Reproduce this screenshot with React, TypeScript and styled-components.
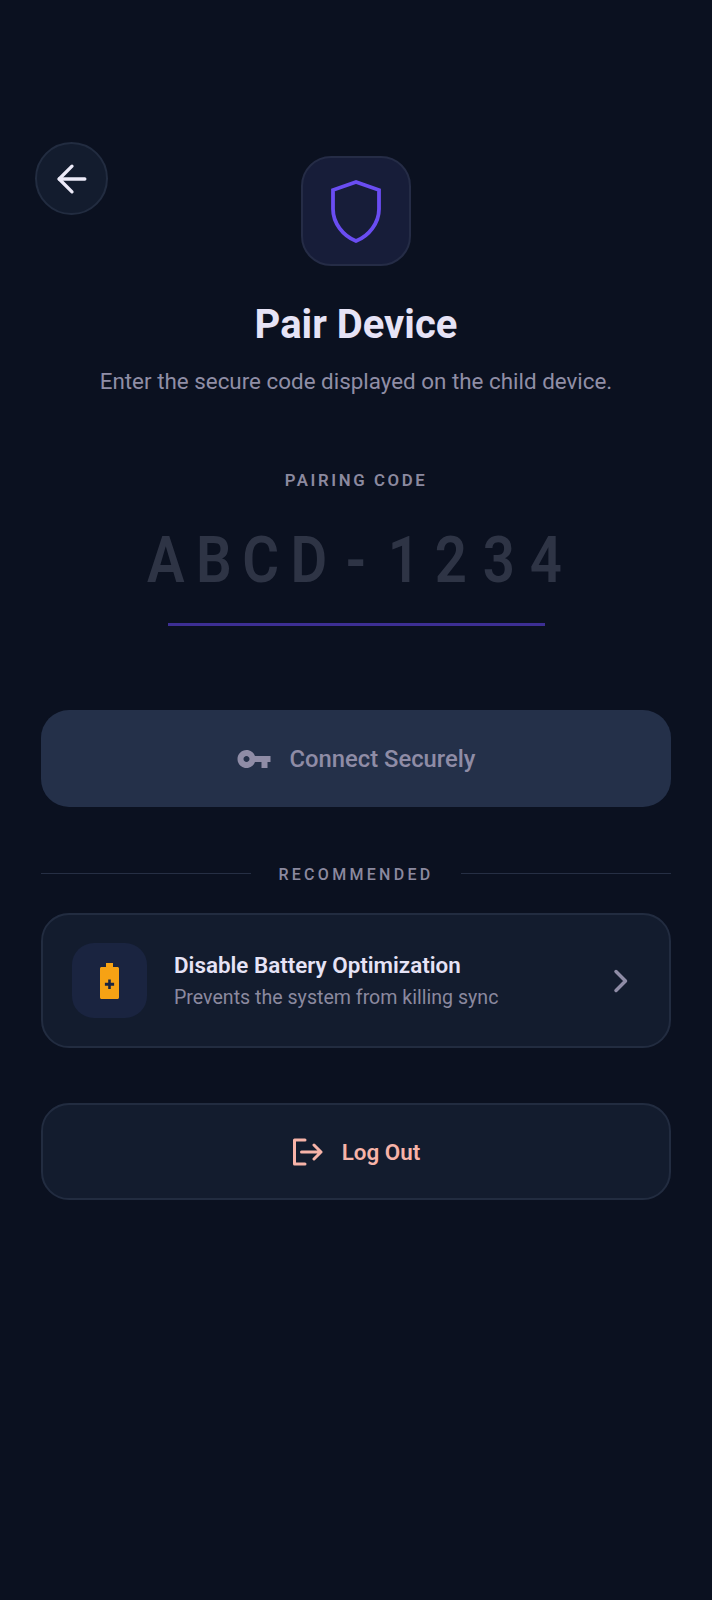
import { ArrowLeft } from "lucide-react";
import styled, { createGlobalStyle } from "styled-components";

const CODE_HINT = "ABCD-1234".split("");

export default function App() {
  return (
    <>
      <GlobalStyle />
      <Screen>
        <BackButton aria-label="Back">
          <ArrowLeft size={44} strokeWidth={1.8} />
        </BackButton>

        <Header>
          <ShieldTile>
            <svg width="52" height="66" viewBox="0 0 52 66" fill="none">
              <path
                d="M26 4 L3 12 V31 C3 45 13 58 26 63 C39 58 49 45 49 31 V12 Z"
                stroke="#6a4df2"
                strokeWidth="3.800"
                strokeLinejoin="miter"
              />
            </svg>
          </ShieldTile>
          <Title>Pair Device</Title>
          <Subtitle>Enter the secure code displayed on the child device.</Subtitle>
        </Header>

        <CodeSection>
          <CodeLabel>PAIRING CODE</CodeLabel>
          <CodeHint>
            {CODE_HINT.map((char, i) => (
              <CodeChar key={i}>{char}</CodeChar>
            ))}
          </CodeHint>
          <CodeUnderline />
        </CodeSection>

        <ConnectButton>
          <svg width="36" height="36" viewBox="0 0 24 24" fill="#8f8ca6">
            <path d="M12.65 10C11.83 7.67 9.61 6 7 6c-3.31 0-6 2.69-6 6s2.69 6 6 6c2.61 0 4.83-1.67 5.65-4H17v4h4v-4h2v-4H12.65zM7 14c-1.100 0-2-.9-2-2s.9-2 2-2 2 .9 2 2-.9 2-2 2z" />
          </svg>
          Connect Securely
        </ConnectButton>

        <Divider>
          <DividerLine />
          <DividerText>RECOMMENDED</DividerText>
          <DividerLine />
        </Divider>

        <BatteryCard>
          <BatteryTile>
            <svg width="19" height="36" viewBox="0 0 19 36">
              <path
                fill="#f6a214"
                fillRule="evenodd"
                d="M6 0h7v4h4.500c.8 0 1.500.7 1.500 1.500V34.500c0 .8-.7 1.500-1.500 1.500H1.500C.7 36 0 35.300 0 34.500V5.500C0 4.700.7 4 1.500 4H6zM8.200 16.500v3.300H4.900v3h3.300v3.300h2.600v-3.300h3.300v-3h-3.300v-3.300z"
              />
            </svg>
          </BatteryTile>
          <CardText>
            <CardTitle>Disable Battery Optimization</CardTitle>
            <CardSubtitle>Prevents the system from killing sync</CardSubtitle>
          </CardText>
          <svg width="16" height="24" viewBox="0 0 16 24" fill="none">
            <path
              d="M3 2.500 L12.500 12 L3 21.500"
              stroke="#8f8ca6"
              strokeWidth="3.500"
              strokeLinecap="round"
              strokeLinejoin="round"
            />
          </svg>
        </BatteryCard>

        <LogoutButton>
          <svg width="31" height="28" viewBox="0 0 31 28" fill="none">
            <path
              d="M13 2H2.500V26H13M9.500 14H29M22 7 L29 14 L22 21"
              stroke="#f7b3a8"
              strokeWidth="3"
              strokeLinecap="round"
              strokeLinejoin="round"
            />
          </svg>
          Log Out
        </LogoutButton>
      </Screen>
    </>
  );
}

// ------------------ STYLES ------------------
const GlobalStyle = createGlobalStyle`
  html, body {
    margin: 0;
    padding: 0;
    background: #0b1120;
  }

  * {
    box-sizing: border-box;
  }
`;

const Screen = styled.div`
  position: relative;
  width: 712px;
  min-height: 1600px;
  padding: 156px 41px 0;
  display: flex;
  flex-direction: column;
  background: #0b1120;
  font-family: Roboto, "Liberation Sans", sans-serif;
`;

const BackButton = styled.button`
  position: absolute;
  left: 35px;
  top: 142px;
  width: 73px;
  height: 73px;
  padding: 0;
  display: flex;
  align-items: center;
  justify-content: center;
  border-radius: 50%;
  border: 2px solid #222c40;
  background: #131c2e;
  color: #eceaf8;
`;

const Header = styled.div`
  display: flex;
  flex-direction: column;
  align-items: center;
`;

const ShieldTile = styled.div`
  width: 110px;
  height: 110px;
  display: flex;
  align-items: center;
  justify-content: center;
  border-radius: 30px;
  border: 2px solid #252c46;
  background: #171d39;
`;

const Title = styled.h1`
  margin: 35px 0 0;
  font-size: 40px;
  line-height: 48px;
  font-weight: 700;
  color: #e6e3f6;
`;

const Subtitle = styled.p`
  margin: 17px 0 0;
  font-size: 22.400px;
  line-height: 30px;
  font-weight: 400;
  color: #908ea6;
`;

const CodeSection = styled.div`
  margin-top: 73px;
  display: flex;
  flex-direction: column;
  align-items: center;
`;

const CodeLabel = styled.div`
  font-size: 16.800px;
  line-height: 22px;
  font-weight: 600;
  letter-spacing: 2.600px;
  color: #8b899f;
`;

const CodeHint = styled.div`
  margin-top: 32px;
  display: flex;
  justify-content: center;
  font-size: 64px;
  line-height: 76px;
  font-weight: 600;
  color: #2e3445;
`;

const CodeChar = styled.span`
  display: inline-block;
  width: 47.500px;
  text-align: center;
  transform: scaleX(0.88);
`;

const CodeUnderline = styled.div`
  margin-top: 24px;
  width: 377px;
  height: 3px;
  background: #3d2f94;
`;

const ConnectButton = styled.button`
  margin-top: 84px;
  height: 97px;
  display: flex;
  align-items: center;
  justify-content: center;
  gap: 17px;
  border: none;
  border-radius: 28px;
  background: #243049;
  color: #8f8ca6;
  font-family: inherit;
  font-size: 23.800px;
  font-weight: 500;
`;

const Divider = styled.div`
  margin-top: 53px;
  display: flex;
  align-items: center;
  gap: 27px;
`;

const DividerLine = styled.div`
  flex: 1;
  height: 1px;
  background: #262f44;
`;

const DividerText = styled.div`
  padding-top: 4px;
  font-size: 16px;
  line-height: 22px;
  font-weight: 500;
  letter-spacing: 3.300px;
  color: #8b899f;
`;

const BatteryCard = styled.div`
  margin-top: 27px;
  height: 135px;
  padding: 0 40px 0 29px;
  display: flex;
  align-items: center;
  border-radius: 28px;
  border: 2px solid #222c40;
  background: #131c2e;
`;

const BatteryTile = styled.div`
  width: 75px;
  height: 75px;
  display: flex;
  align-items: center;
  justify-content: center;
  border-radius: 22px;
  background: #1a2440;
`;

const CardText = styled.div`
  flex: 1;
  margin-left: 27px;
`;

const CardTitle = styled.div`
  font-size: 22.400px;
  line-height: 28px;
  font-weight: 600;
  color: #e6e3f6;
`;

const CardSubtitle = styled.div`
  margin-top: 6px;
  font-size: 19.600px;
  line-height: 26px;
  color: #8b899f;
`;

const LogoutButton = styled.button`
  margin-top: 55px;
  height: 97px;
  display: flex;
  align-items: center;
  justify-content: center;
  gap: 19px;
  border-radius: 28px;
  border: 2px solid #222c40;
  background: #131c2e;
  color: #f7b3a8;
  font-family: inherit;
  font-size: 22.400px;
  font-weight: 600;
`;
